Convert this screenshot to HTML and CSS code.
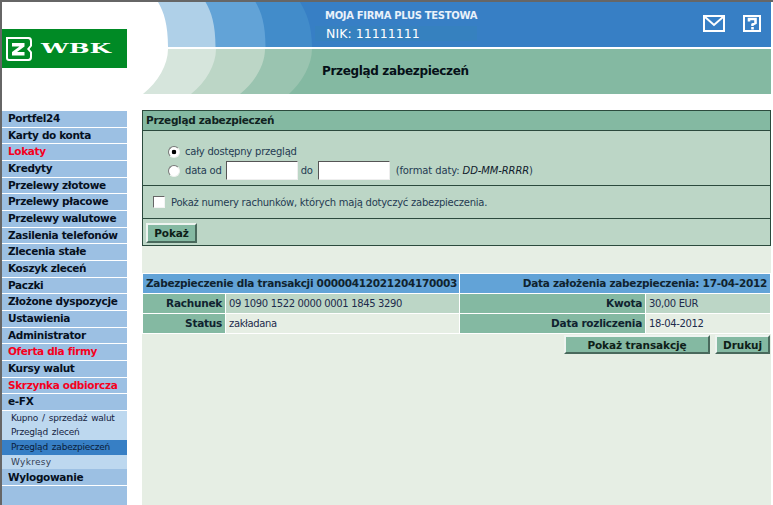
FILE: index.html
```html
<!DOCTYPE html>
<html lang="pl">
<head>
<meta charset="utf-8">
<title>Przegląd zabezpieczeń</title>
<link rel="stylesheet" href="styles.css">
</head>
<body>
<div class="frame">
  <header class="header">
    <svg class="art" viewBox="2 2 769 92" width="769" height="92" aria-hidden="true">
      <path fill="#afd0e8" d="M158 2C164 12 168 25 168 47H771V2Z"/>
      <path fill="#62a3d7" transform="translate(47.5 0)" d="M158 2C164 12 168 25 168 47H771V2Z"/>
      <path fill="#428cca" transform="translate(97.5 0)" d="M158 2C164 12 168 25 168 47H771V2Z"/>
      <path fill="#377fc5" d="M300 2C306 12 312 25 312 47H771V2Z"/>
      <path fill="#d6e5dc" d="M168 49C168 65 158 82 143 94H771V49Z"/>
      <path fill="#bcd6c6" transform="translate(48 0)" d="M168 49C168 65 158 82 143 94H771V49Z"/>
      <path fill="#9ac4b0" transform="translate(97 0)" d="M168 49C168 65 158 82 143 94H771V49Z"/>
      <path fill="#84b9a2" d="M312 49C312 65 302 82 289 94H771V49Z"/>
    </svg>
    <svg class="logo" viewBox="0 0 125 39" width="125" height="39" role="img" aria-label="BZ WBK">
      <rect width="125" height="39" fill="#008a25"/>
      <path fill="#fff" d="M4 8H26.500C29 8 30 9.500 30 12V17L27.500 20L30 23V28C30 30.500 29 32 26.500 32H7C5 32 4 31 4 29Z"/>
      <path fill="#008a25" d="M6 10H26C27.500 10 28 11 28 12.500V16.500L25 20L28 23.500V27.500C28 29 27.500 30 26 30H7.500C6.500 30 6 29.500 6 28.500Z"/>
      <path fill="#fff" d="M10 14H22.500V17.500L15 23H22.500V26.500H10V23L17.500 17.500H10Z"/>
      <text class="logo-text" x="39" y="24" textLength="70" lengthAdjust="spacingAndGlyphs">WBK</text>
    </svg>
    <div class="top-band">
      <div class="company">
        <div class="company-name">MOJA FIRMA PLUS TESTOWA</div>
        <div class="company-nik">NIK: 11111111</div>
      </div>
      <div class="top-icons">
        <svg viewBox="0 0 22 17" width="22" height="17" aria-label="Wiadomości" role="img">
          <rect x="1" y="1" width="20" height="15" fill="none" stroke="#fff" stroke-width="2"/>
          <path d="M2 2L11 10L20 2" fill="none" stroke="#fff" stroke-width="2"/>
        </svg>
        <svg viewBox="0 0 18 17" width="18" height="17" aria-label="Pomoc" role="img">
          <rect x="1" y="1" width="16" height="15" fill="none" stroke="#fff" stroke-width="2"/>
          <path d="M6 6.500V4H12.500V8L9.500 9.500V11" fill="none" stroke="#fff" stroke-width="2.600"/>
          <rect x="8.200" y="12" width="2.600" height="2.500" fill="#fff"/>
        </svg>
      </div>
    </div>
    <div class="title-band"><h1 class="page-title">Przegląd zabezpieczeń</h1></div>
  </header>

  <div class="content">
    <nav class="sidebar">
      <a class="nav-item">Portfel24</a>
      <a class="nav-item">Karty do konta</a>
      <a class="nav-item hot">Lokaty</a>
      <a class="nav-item">Kredyty</a>
      <a class="nav-item">Przelewy złotowe</a>
      <a class="nav-item">Przelewy płacowe</a>
      <a class="nav-item">Przelewy walutowe</a>
      <a class="nav-item">Zasilenia telefonów</a>
      <a class="nav-item">Zlecenia stałe</a>
      <a class="nav-item">Koszyk zleceń</a>
      <a class="nav-item">Paczki</a>
      <a class="nav-item">Złożone dyspozycje</a>
      <a class="nav-item">Ustawienia</a>
      <a class="nav-item">Administrator</a>
      <a class="nav-item hot">Oferta dla firmy</a>
      <a class="nav-item">Kursy walut</a>
      <a class="nav-item hot">Skrzynka odbiorcza</a>
      <a class="nav-item">e-FX</a>
      <div class="submenu">
        <a class="sub-item">Kupno / sprzedaż walut</a>
        <a class="sub-item">Przegląd zleceń</a>
        <a class="sub-item active">Przegląd zabezpieczeń</a>
        <a class="sub-item muted">Wykresy</a>
      </div>
      <a class="nav-item nav-last">Wylogowanie</a>
    </nav>

    <main class="main">
      <section class="panel">
        <h2 class="panel-title">Przegląd zabezpieczeń</h2>
        <div class="panel-range">
          <label class="range-row"><input class="radio" type="radio" name="r" checked>cały dostępny przegląd</label>
          <label class="range-row"><input class="radio" type="radio" name="r">data od<input class="date" type="text">do<input class="date" type="text"><span class="hint">(format daty: <i>DD-MM-RRRR</i>)</span></label>
        </div>
        <div class="panel-check">
          <label class="check-row"><input class="check" type="checkbox">Pokaż numery rachunków, których mają dotyczyć zabezpieczenia.</label>
        </div>
        <div class="panel-actions"><button class="btn btn-show" type="button">Pokaż</button></div>
      </section>

      <div class="details">
        <div class="d-head">Zabezpieczenie dla transakcji 00000412021204170003</div>
        <div class="d-head d-head-right">Data założenia zabezpieczenia: 17-04-2012</div>
        <div class="d-label">Rachunek</div><div class="d-val alt">09 1090 1522 0000 0001 1845 3290</div>
        <div class="d-label">Kwota</div><div class="d-val alt">30,00 EUR</div>
        <div class="d-label">Status</div><div class="d-val">zakładana</div>
        <div class="d-label">Data rozliczenia</div><div class="d-val">18-04-2012</div>
      </div>
      <div class="actions">
        <button class="btn btn-wide" type="button">Pokaż transakcję</button>
        <button class="btn btn-print" type="button">Drukuj</button>
      </div>
    </main>
  </div>
</div>
</body>
</html>
```
FILE: styles.css
```css
* { box-sizing: border-box; }
html, body { margin: 0; height: 100%; overflow: hidden; background: #fff; }
body { font-family: "DejaVu Sans", Verdana, sans-serif; color: #1a2a2a; }

.frame {
  width: 773px;
  height: 505px;
  border-top: 2px solid #666;
  border-left: 2px solid #666;
  padding-right: 2px;
  display: flex;
  flex-direction: column;
}

/* header */
.header { position: relative; height: 92px; display: flex; flex-direction: column; flex: none; }
.art { position: absolute; left: 0; top: 0; display: block; }
.logo { position: absolute; left: 0; top: 27px; display: block; }
.logo-text { font-family: "DejaVu Serif", serif; font-weight: bold; font-size: 12px; fill: #fff; }

.top-band {
  position: relative;
  height: 45px;
  margin-bottom: 2px;
  padding: 7px 10px 0 323px;
  display: flex;
  justify-content: space-between;
}
.company-name { font-size: 10px; font-weight: bold; color: #e9f1fa; line-height: 14px; letter-spacing: -0.32px; }
.company-nik {
  font-size: 12.500px;
  color: #fff;
  line-height: 15px;
  margin: 3px 0 0 -10px;
  padding: 0 6px 0 11px;
  background: #3681bf;
  letter-spacing: 0.06px;
}
.top-icons { display: flex; gap: 18px; padding-top: 6px; }
.top-icons svg { display: block; }

.title-band { position: relative; height: 45px; padding: 0 0 2px 320px; display: flex; align-items: center; }
.page-title { margin: 0; font-size: 12px; line-height: 16px; font-weight: bold; color: #061018; letter-spacing: -0.34px; }

/* layout */
.content { display: flex; flex: 1; min-height: 0; }

/* sidebar */
.sidebar {
  width: 125px;
  margin-top: 17px;
  background: #9cc0e3;
  flex: none;
  display: flex;
  flex-direction: column;
}
.nav-item {
  height: 16.667px;
  line-height: 15px;
  padding-left: 6px;
  font-size: 10.500px;
  font-weight: bold;
  color: #06101e;
  border-bottom: 1px solid #fff;
  letter-spacing: -0.34px;
  white-space: nowrap;
}
.nav-item.hot { color: #f5001e; }
.nav-last { line-height: 16px; }
.submenu { background: #bdd8ef; display: flex; flex-direction: column; }
.sub-item {
  height: 14.667px;
  line-height: 15px;
  padding-left: 9px;
  font-size: 9px;
  color: #15233f;
  letter-spacing: -0.22px;
  word-spacing: 1.300px;
  white-space: nowrap;
}
.sub-item.active { background: #377fc5; color: #0a1c3a; }
.sub-item.muted { color: #333d55; letter-spacing: 0.3px; }

/* main */
.main {
  width: 629px;
  margin-left: 15px;
  margin-top: 16px;
  background: #e6eee4;
  display: flex;
  flex-direction: column;
}
.panel { border: 1px solid #2b4a3d; background: #bcd6c6; height: 136px; display: flex; flex-direction: column; font-size: 10px; color: #243b52; }
.panel-title {
  margin: 0;
  height: 20px;
  line-height: 18px;
  padding-left: 3px;
  background: #84b9a2;
  border-bottom: 1px solid #2b4a3d;
  font-size: 10.500px;
  font-weight: bold;
  color: #10231f;
  letter-spacing: -0.3px;
}
.panel-range { height: 55px; padding: 11px 0 0 25px; border-bottom: 1px solid #2b4a3d; }
.range-row { display: flex; align-items: center; height: 19px; white-space: nowrap; letter-spacing: -0.22px; }
.radio {
  appearance: none;
  width: 12px;
  height: 12px;
  margin: 0 5px 0 0;
  border-radius: 50%;
  background: #fff;
  border: 1px solid;
  border-color: #777 #eef2ee #eef2ee #777;
}
.radio:checked { background: radial-gradient(circle, #000 2px, #fff 2.600px); }
.date {
  appearance: none;
  width: 72px;
  height: 19px;
  margin: 0 3px 0 4px;
  background: #fff;
  border: 1px solid;
  border-color: #555 #eee #eee #555;
  border-radius: 0;
}
.date + .date { margin-left: 5px; }
.hint { margin-left: 3px; letter-spacing: -0.12px; }
.hint i { color: #10202c; }
.panel-check { height: 33px; padding: 0 0 0 10px; border-bottom: 1px solid #2b4a3d; display: flex; align-items: center; }
.check-row { display: flex; align-items: center; white-space: nowrap; letter-spacing: -0.24px; }
.check {
  appearance: none;
  width: 12px;
  height: 12px;
  margin: 0 6px 0 0;
  background: #fff;
  border: 1px solid;
  border-color: #666 #f4f4f4 #f4f4f4 #666;
  border-radius: 0;
}
.panel-actions { flex: 1; padding: 4px 0 0 3px; }

.btn {
  appearance: none;
  display: block;
  height: 19px;
  padding: 0;
  background: #84b9a2;
  border: 2px solid;
  border-color: #eef4f0 #49695c #49695c #eef4f0;
  border-radius: 0;
  font-family: inherit;
  font-size: 10.500px;
  font-weight: bold;
  color: #0e2018;
  letter-spacing: -0.1px;
}
.btn-show { width: 51px; height: 20px; }
.btn-wide { width: 146px; }
.btn-print { width: 55px; }

/* details */
.details {
  margin-top: 27px;
  display: grid;
  grid-template-columns: 82px 233px 185px 124px;
  grid-auto-rows: 19px;
  gap: 1px;
  padding: 1px;
  background: #fff;
  font-size: 10px;
  color: #1d2b4c;
}
.d-head {
  grid-column: span 2;
  background: #62a3d7;
  font-size: 10.500px;
  font-weight: bold;
  color: #10232f;
  line-height: 19px;
  padding: 0 3px;
  white-space: nowrap;
  letter-spacing: -0.28px;
}
.d-head-right { text-align: right; }
.d-label {
  background: #84b9a2;
  text-align: right;
  font-size: 10.500px;
  font-weight: bold;
  color: #10232f;
  line-height: 19px;
  padding-right: 3px;
  letter-spacing: -0.25px;
}
.d-val { background: #e6eee4; line-height: 19px; padding-left: 3px; letter-spacing: -0.36px; white-space: nowrap; }
.d-val.alt { background: #bcd6c6; }

.actions { display: flex; justify-content: flex-end; gap: 5px; padding: 1px 1px 0 0; }
```
